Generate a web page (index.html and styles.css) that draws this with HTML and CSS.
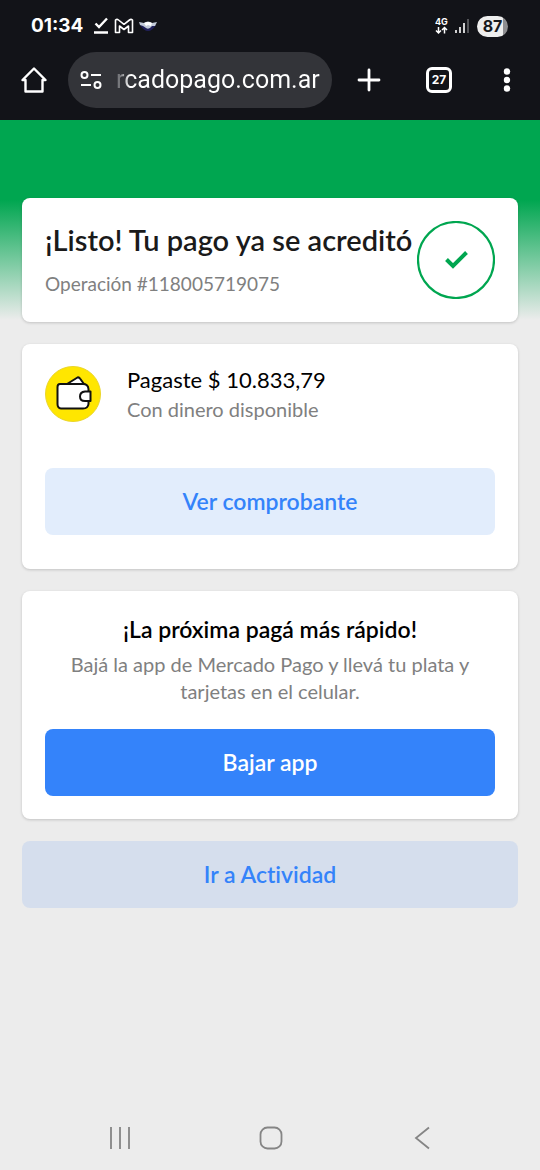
FILE: index.html
```html
<!DOCTYPE html>
<html lang="es-AR">
<head>
<meta charset="utf-8">
<meta name="viewport" content="width=device-width, initial-scale=1">
<title>Mercado Pago</title>
<link rel="stylesheet" href="styles.css">
</head>
<body>
<header class="browser">
  <div class="status">
    <span class="time">01:34</span>
    <svg class="download" width="16" height="18" viewBox="0 0 16 18" fill="none" stroke="#fff" stroke-width="2.400"><path d="M2.500 6.500L6 10L14 1.500M1 15.500H15"/></svg>
    <svg class="mail" width="20" height="16" viewBox="0 0 20 16" fill="none" stroke="#fff" stroke-width="1.600" stroke-linejoin="round"><path d="M1.500 2Q3 .8 4.500 2L10 6.300L15.500 2Q17 .8 18.500 2V14.500H14.500V8L10 11.500L5.500 8V14.500H1.500Z"/></svg>
    <svg class="hands" width="18" height="14" viewBox="0 0 18 14"><path d="M1 6Q9 18 17 6" fill="#20205a"/><path d="M0 3L5 4Q9 1 13 4L18 3L16 7L13 7Q10 11 7 9L4 7L1 6Z" fill="#c3cbd9"/><path d="M5 4Q9 2 13 4L12 7L9 6L7 7Z" fill="#fff"/></svg>
    <svg class="network" width="14" height="18" viewBox="0 0 14 18" fill="none" stroke="#fff" stroke-width="1.500"><text x="0" y="8" class="network-label">4G</text><path d="M3.500 10V16M1 13.500L3.500 16L6 13.500M9.500 16.500V10.500M7 13L9.500 10.500L12 13"/></svg>
    <svg class="signal" width="14" height="16" viewBox="0 0 14 16" fill="none" stroke="#fff" stroke-width="1.600"><path d="M1 15V12M5 15V9M9 15V5"/><path d="M13 15V1" stroke="#65666a"/></svg>
    <span class="battery">87</span>
  </div>
  <div class="toolbar">
    <button class="tool" aria-label="Inicio"><svg width="26" height="26" viewBox="0 0 26 26" fill="none" stroke="#fff" stroke-width="2.400" stroke-linejoin="round"><path d="M1.500 13L13 1.500L24.500 13H21.500V24.500H4.500V13Z"/></svg></button>
    <div class="address">
      <svg width="22" height="18" viewBox="0 0 22 18" fill="none" stroke="#fff" stroke-width="2"><circle cx="4.500" cy="4" r="3"/><path d="M11 4H21M1 14H11"/><circle cx="17.500" cy="14" r="3"/></svg>
      <input class="url" type="text" aria-label="Dirección web" value="rcadopago.com.ar">
    </div>
    <button class="tool" aria-label="Nueva pestaña"><svg width="24" height="24" viewBox="0 0 24 24" fill="none" stroke="#fff" stroke-width="2.800" stroke-linecap="round"><path d="M12 2V22M2 12H22"/></svg></button>
    <button class="tool" aria-label="27 pestañas"><span class="tabs">27</span></button>
    <button class="tool" aria-label="Menú"><svg width="8" height="24" viewBox="0 0 8 24" fill="#fff"><circle cx="4" cy="3.500" r="3.200"/><circle cx="4" cy="12" r="3.200"/><circle cx="4" cy="20.500" r="3.200"/></svg></button>
  </div>
</header>
<main class="page">
  <section class="card result">
    <div>
      <h1 class="result-title">¡Listo! Tu pago ya se acreditó</h1>
      <p class="operation">Operación #118005719075</p>
    </div>
    <svg class="success" width="78" height="78" viewBox="0 0 78 78" fill="none" stroke="#00a650"><circle cx="39" cy="39" r="38" stroke-width="2.200"/><path d="M29.500 38.500L36 45L49.500 31.500" stroke-width="4"/></svg>
  </section>
  <section class="card payment">
    <div class="payment-row">
      <svg width="56" height="56" viewBox="0 0 56 56"><circle cx="28" cy="28" r="27.500" fill="#ffe600" stroke="#ead52b"/><g fill="#fff" stroke="#111" stroke-width="2" stroke-linejoin="round"><path d="M22 18L32.500 11.500Q34 11 35 12.500L39 18Z"/><path d="M15 18H38Q43 18 43.500 23V38Q43 42.500 38 42.500H16Q12.500 42 12.500 38V21Q12.500 18 15 18Z"/><path d="M45.500 25.500H40Q35 26 35 30.500Q35 35 40 35H45.500Z"/></g></svg>
      <div>
        <h2 class="amount">Pagaste $ 10.833,79</h2>
        <p class="method">Con dinero disponible</p>
      </div>
    </div>
    <button class="button quiet">Ver comprobante</button>
  </section>
  <section class="card promo">
    <h2 class="promo-title">¡La próxima pagá más rápido!</h2>
    <p class="promo-text">Bajá la app de Mercado Pago y llevá tu plata y tarjetas en el celular.</p>
    <button class="button loud">Bajar app</button>
  </section>
  <a class="button activity" href="#actividad">Ir a Actividad</a>
</main>
<nav class="system" aria-label="Sistema">
  <button class="tool" aria-label="Recientes"><svg width="22" height="24" viewBox="0 0 22 24" fill="none" stroke="#858585" stroke-width="1.800"><path d="M2 1V23M11 1V23M20 1V23"/></svg></button>
  <button class="tool" aria-label="Pantalla principal"><svg width="24" height="24" viewBox="0 0 24 24" fill="none" stroke="#858585" stroke-width="1.800"><rect x="1.500" y="1.500" width="21" height="21" rx="7"/></svg></button>
  <button class="tool" aria-label="Atrás"><svg width="16" height="24" viewBox="0 0 16 24" fill="none" stroke="#858585" stroke-width="1.800"><path d="M15 1.500L2 12L15 22.500"/></svg></button>
</nav>
</body>
</html>
```
FILE: styles.css
```css
* { box-sizing: border-box; }
body {
  margin: 0;
  min-height: 100vh;
  display: flex;
  flex-direction: column;
  background: #ececec;
  font-family: Lato, "Open Sans", sans-serif;
  font-variant-ligatures: none;
}
h1, h2, p { margin: 0; }
svg { display: block; flex: none; }
button, input { font-family: inherit; }

.browser {
  background: #121318;
  color: #fff;
  padding-bottom: 12px;
}
.status {
  height: 52px;
  display: flex;
  align-items: center;
  padding: 0 32px 0 31px;
}
.time { font: 700 19px/24px Inter, sans-serif; }
.download { margin-left: 10px; }
.mail { margin-left: 5px; }
.hands { margin-left: 5px; }
.network { margin-left: auto; }
.network-label { font: 700 9px Inter, sans-serif; fill: #fff; stroke: none; }
.signal { margin: 0 8px 0 6px; }
.battery {
  width: 31px;
  border-radius: 12px;
  background: linear-gradient(90deg, #eee 85%, #8d8d90 85%);
  color: #18191d;
  font: 700 16px/21px Inter, sans-serif;
  text-align: center;
}
.toolbar {
  display: grid;
  grid-template-columns: 68px minmax(0, 1fr) 73px 68px 67px;
  align-items: center;
}
.tool {
  display: flex;
  align-items: center;
  justify-content: center;
  border: 0;
  padding: 0;
  background: none;
  color: inherit;
}
.address {
  height: 56px;
  border-radius: 28px;
  background: #333439;
  display: flex;
  align-items: center;
  gap: 14px;
  padding: 0 10px 0 12px;
}
.url {
  flex: 1;
  min-width: 0;
  border: 0;
  padding: 0;
  background: linear-gradient(90deg, #77787c 4px, #fff 14px);
  background-clip: text;
  color: transparent;
  font-family: Roboto, sans-serif;
  font-size: 25px;
  line-height: 32px;
}
.tabs {
  width: 26px;
  border: 3px solid #fff;
  border-radius: 6px;
  font: 700 12px/20px Inter, sans-serif;
  text-align: center;
}

.page {
  flex: 1;
  display: flex;
  flex-direction: column;
  gap: 22px;
  padding: 78px 22px 22px;
  background: linear-gradient(#00a650 80px, #ececec 200px);
}
.card {
  background: #fff;
  border-radius: 8px;
  padding: 23px;
  box-shadow: 0 1px 3px #0000002e;
}
.result {
  display: flex;
  justify-content: space-between;
}
.result-title {
  color: #1a1a1a;
  font-size: 29px;
  font-weight: 600;
  line-height: 38px;
  white-space: nowrap;
}
.operation { margin-top: 12px; color: #808080; font-size: 19px; line-height: 26px; }
.payment { padding-top: 22px; padding-bottom: 34px; }
.payment-row {
  display: flex;
  gap: 26px;
  margin-bottom: 44px;
}
.amount { font-size: 22px; font-weight: 400; line-height: 28px; }
.method { color: #808080; font-size: 20px; line-height: 30px; }
.promo { text-align: center; }
.promo-title { font-size: 23px; font-weight: 600; line-height: 30px; }
.promo-text {
  margin: 7px 0 24px;
  color: #808080;
  font-size: 20px;
  line-height: 27px;
}
.button {
  display: block;
  width: 100%;
  border: 0;
  border-radius: 8px;
  padding: 18px;
  font-size: 23px;
  font-weight: 600;
  line-height: 31px;
  text-align: center;
  text-decoration: none;
}
.quiet { background: #e2edfc; color: #3483fa; }
.loud { background: #3483fa; color: #fff; }
.activity { background: #d5deed; color: #3483fa; }
.system {
  display: grid;
  grid-template-columns: repeat(3, 1fr);
  padding: 20px 42px 20px 44px;
}
```
